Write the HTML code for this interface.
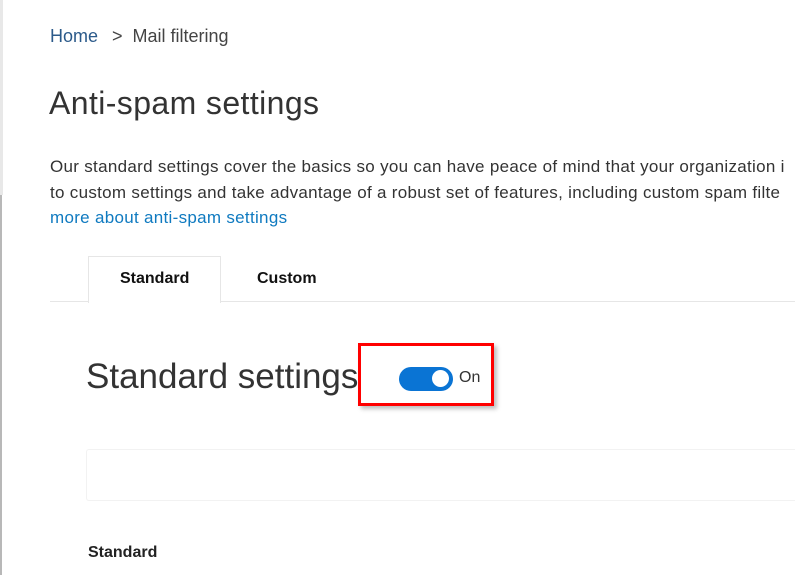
<!DOCTYPE html>
<html style="overflow:hidden"><head><style>
body{margin:0;width:795px;height:575px;overflow:hidden;background:#fff;font-family:"Liberation Sans",sans-serif;position:relative;color:#333}
.a{position:absolute;white-space:nowrap}
</style></head><body>
<div class="a" style="left:0;top:0;width:3px;height:195px;background:#e8e8e8"></div>
<div class="a" style="left:0;top:195px;width:2px;height:380px;background:#b8b8b8"></div>
<div class="a" style="left:50px;top:26px;font-size:18px;color:#2b5a8a">Home</div>
<div class="a" style="left:112px;top:26px;font-size:18px;color:#444">&gt;&nbsp; Mail filtering</div>
<div class="a" style="left:49px;top:85px;font-size:32px;letter-spacing:0.4px;color:#333">Anti-spam settings</div>
<div class="a" style="left:50px;top:154px;width:745px;overflow:hidden;font-size:17px;letter-spacing:0.3px;line-height:25.5px;color:#333">Our standard settings cover the basics so you can have peace of mind that your organization i<br>to custom settings and take advantage of a robust set of features, including custom spam filte<br><span style="color:#0f7ac0">more about anti-spam settings</span></div>
<div class="a" style="left:88px;top:256px;width:131px;height:46px;border:1px solid #e6e6e6;border-bottom:none;background:#fff;z-index:2"></div>
<div class="a" style="left:50px;top:301px;width:745px;height:1px;background:#e6e6e6"></div>
<div class="a" style="left:120px;top:270px;font-size:16px;font-weight:bold;color:#111;z-index:3">Standard</div>
<div class="a" style="left:257px;top:270px;font-size:16px;font-weight:bold;color:#111">Custom</div>
<div class="a" style="left:86px;top:357px;font-size:35px;color:#333">Standard settings</div>
<div class="a" style="left:358px;top:343px;width:130px;height:57px;border:3px solid #f00;box-shadow:3px 3px 4px rgba(0,0,0,.25);background:#fff"></div>
<div class="a" style="left:399px;top:367px;width:54px;height:24px;border-radius:12px;background:#0a74d4"></div>
<div class="a" style="left:432px;top:370px;width:17px;height:17px;border-radius:9px;background:#fff"></div>
<div class="a" style="left:459px;top:369px;font-size:16px;color:#333">On</div>
<div class="a" style="left:86px;top:449px;width:709px;height:50px;border:1px solid #f2f2f2;border-right:none;border-radius:3px 0 0 3px"></div>
<div class="a" style="left:88px;top:544px;font-size:16px;font-weight:bold;color:#222">Standard</div>
</body></html>
